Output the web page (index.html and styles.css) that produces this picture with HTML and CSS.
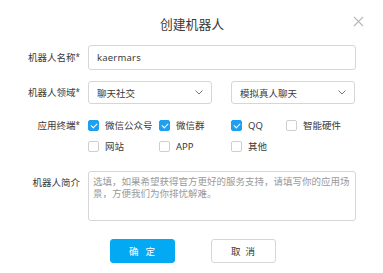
FILE: index.html
```html
<!DOCTYPE html>
<html lang="zh">
<head>
<meta charset="utf-8">
<link rel="stylesheet" href="styles.css">
</head>
<body>
<div class="dialog">
  <div class="title">创建机器人</div>
  <svg class="close" width="11" height="11" viewBox="0 0 11 11"><path d="M1 1L10 10M10 1L1 10" stroke="#b8b8b8" stroke-width="1.1" fill="none"/></svg>
  <div class="form">
    <div class="row row-name">
      <div class="label">机器人名称<span class="req">*</span></div>
      <div class="input">kaermars</div>
    </div>
    <div class="row row-domain">
      <div class="label">机器人领域<span class="req">*</span></div>
      <div class="selects">
        <div class="select"><span>聊天社交</span><svg width="8" height="5" viewBox="0 0 8 5"><path d="M0.5 0.5L4 4L7.5 0.5" stroke="#777" stroke-width="1" fill="none"/></svg></div>
        <div class="select"><span>模拟真人聊天</span><svg width="8" height="5" viewBox="0 0 8 5"><path d="M0.5 0.5L4 4L7.5 0.5" stroke="#777" stroke-width="1" fill="none"/></svg></div>
      </div>
    </div>
    <div class="row row-term">
      <div class="label">应用终端<span class="req">*</span></div>
      <div class="checks">
        <label class="check"><span class="box on"></span>微信公众号</label>
        <label class="check"><span class="box on"></span>微信群</label>
        <label class="check"><span class="box on"></span>QQ</label>
        <label class="check"><span class="box"></span>智能硬件</label>
        <label class="check"><span class="box"></span>网站</label>
        <label class="check"><span class="box"></span>APP</label>
        <label class="check"><span class="box"></span>其他</label>
      </div>
    </div>
    <div class="row row-intro">
      <div class="label">机器人简介</div>
      <div class="textarea"><div class="tl">选填，如果希望获得官方更好的服务支持，请填写你的应用场</div><div class="tl">景，方便我们为你排忧解难。</div></div>
    </div>
  </div>
  <div class="buttons">
    <button class="btn primary ok">确定</button>
    <button class="btn cancel">取消</button>
  </div>
</div>
</body>
</html>
```
FILE: styles.css
```css
* { box-sizing: border-box; }
html, body { margin: 0; padding: 0; background: #fff; }
body {
  font-family: "Noto Sans", "Noto Sans CJK SC", sans-serif;
  font-size: 9.5px;
  color: #3a3a3a;
}
.dialog {
  position: relative;
  width: 383px;
  height: 273px;
  padding-top: 16px;
}
.title {
  height: 16px;
  line-height: 16px;
  font-size: 12.8px;
  text-align: center;
  color: #3a3a3a;
  padding-left: 1px;
}
.close {
  position: absolute;
  left: 353px;
  top: 16px;
}
.form {
  margin-top: 13px;
}
.row {
  display: flex;
  align-items: center;
}
.label {
  width: 88px;
  padding-right: 8px;
  text-align: right;
  white-space: nowrap;
  line-height: 14px;
}
.req {
  font-size: 8px;
  vertical-align: 1px;
}
.row-name { height: 25px; }
.input {
  width: 268px;
  height: 25px;
  border: 1px solid #d6d6d6;
  border-radius: 3px;
  padding-left: 8px;
  line-height: 23px;
  letter-spacing: 0.2px;
}
.row-domain { margin-top: 11px; height: 23px; }
.selects {
  display: flex;
  gap: 19px;
}
.select {
  width: 124px;
  height: 23px;
  border: 1px solid #d6d6d6;
  border-radius: 3px;
  padding: 0 8px;
  display: flex;
  align-items: center;
  justify-content: space-between;
}
.row-term {
  margin-top: 14px;
  align-items: flex-start;
}
.checks {
  display: grid;
  grid-template-columns: 71px 72px 55px auto;
  grid-auto-rows: 14px;
  row-gap: 7px;
}
.check {
  display: flex;
  align-items: center;
  gap: 6px;
  white-space: nowrap;
}
.box {
  position: relative;
  width: 11px;
  height: 11px;
  border: 1px solid #cfcfcf;
  border-radius: 2px;
  background: #fff;
  flex: none;
}
.box.on {
  background: #1e9ff0;
  border-color: #1e9ff0;
}
.box.on::after {
  content: "";
  position: absolute;
  left: 3px;
  top: 1px;
  width: 3px;
  height: 5px;
  border-right: 1.3px solid #fff;
  border-bottom: 1.3px solid #fff;
  transform: rotate(45deg);
}
.row-intro {
  margin-top: 18px;
  align-items: flex-start;
}
.row-intro .label { padding-top: 5px; }
.textarea {
  width: 268px;
  height: 50px;
  border: 1px solid #d6d6d6;
  border-radius: 3px;
  padding: 4px 4px;
  color: #9a9a9a;
  white-space: nowrap;
}
.tl {
  height: 12px;
  line-height: 12px;
}
.buttons {
  margin-top: 18px;
  display: flex;
  justify-content: center;
  gap: 36px;
  padding-left: 2px;
}
.btn {
  width: 65px;
  height: 24px;
  border: 1px solid #d6d6d6;
  border-radius: 3px;
  background: #fff;
  font-family: inherit;
  font-size: 9.5px;
  color: #3a3a3a;
  padding: 0;
}
.btn.ok {
  letter-spacing: 7px;
  text-indent: 7px;
}
.btn.cancel {
  letter-spacing: 5px;
  text-indent: 5px;
}
.btn.primary {
  background: #04a9f4;
  border-color: #04a9f4;
  color: #fff;
}
```
